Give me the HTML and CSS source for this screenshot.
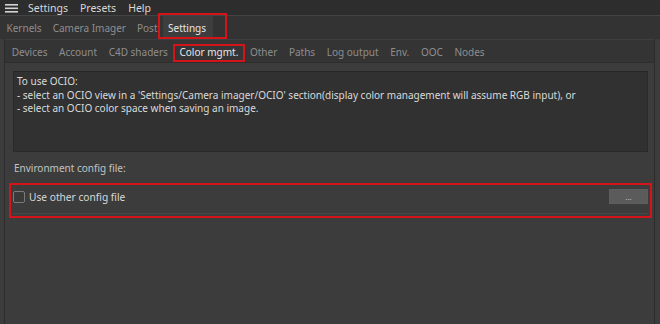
FILE: index.html
```html
<!DOCTYPE html>
<html>
<head>
    <title>Color management settings</title>
    <link rel="stylesheet" href="styles.css">
</head>
<body>
    <div class="menubar">
        <svg class="burger" width="13" height="10" viewBox="0 0 13 10">
            <rect x="0" y="1" width="13" height="1.6" fill="#d4d4d4"/>
            <rect x="0" y="4.5" width="13" height="1.6" fill="#d4d4d4"/>
            <rect x="0" y="8" width="13" height="1.6" fill="#d4d4d4"/>
        </svg>
        <span class="menu-item">Settings</span>
        <span class="menu-item">Presets</span>
        <span class="menu-item">Help</span>
    </div>

    <div class="main-tabs">
        <span class="tab">Kernels</span>
        <span class="tab">Camera Imager</span>
        <span class="tab">Post</span>
        <span class="tab active marked">Settings</span>
    </div>

    <div class="panel">
        <div class="sub-tabs">
            <span class="tab">Devices</span>
            <span class="tab">Account</span>
            <span class="tab">C4D shaders</span>
            <span class="tab active marked">Color mgmt.</span>
            <span class="tab">Other</span>
            <span class="tab">Paths</span>
            <span class="tab">Log output</span>
            <span class="tab">Env.</span>
            <span class="tab">OOC</span>
            <span class="tab">Nodes</span>
        </div>

        <div class="content">
            <div class="info">
                <p>To use OCIO:</p>
                <p>- select an OCIO view in a 'Settings/Camera imager/OCIO' section(display color management will assume RGB input), or</p>
                <p>- select an OCIO color space when saving an image.</p>
            </div>

            <div class="label">Environment config file:</div>

            <div class="config-box">
                <div class="config-row">
                    <label class="check">
                        <span class="box"></span>
                        Use other config file
                    </label>
                    <button class="browse">...</button>
                </div>
            </div>
        </div>
    </div>
</body>
</html>
```

FILE: styles.css
```css
body {
    margin: 0;
    padding: 0;
    width: 660px;
    height: 324px;
    overflow: hidden;
    background-color: #3c3c3c;
    font-family: "Noto Sans", "Open Sans", sans-serif;
    font-size: 10px;
    color: #d6d6d6;
}

.menubar {
    height: 15px;
    display: flex;
    align-items: center;
    background-color: #2d2d2d;
    border-bottom: 1px solid #444444;
    padding-left: 5px;
}

.burger {
    margin-right: 10px;
}

.menu-item {
    margin-right: 12px;
    color: #d8d8d8;
    font-size: 10.5px;
}

.main-tabs {
    height: 23px;
    display: flex;
    align-items: stretch;
    background-color: #333333;
    padding-left: 1px;
}

.tab {
    position: relative;
    display: flex;
    align-items: center;
    padding: 0 5.5px;
    color: #8e8e8e;
}

.main-tabs .tab.active {
    background-color: #3e3e3e;
    color: #e6e6e6;
    padding: 0 7px 0 5px;
}

.marked::after {
    content: "";
    position: absolute;
    border: 2px solid #d3151b;
    pointer-events: none;
}

.main-tabs .marked::after {
    left: -5px;
    right: -14px;
    top: -3px;
    bottom: 0;
}

.panel {
    margin-left: 4px;
    margin-right: 5px;
    height: 285px;
    border-left: 1px solid #2c2c2c;
    border-right: 1px solid #2c2c2c;
}

.sub-tabs {
    height: 22px;
    display: flex;
    align-items: stretch;
    background-color: #343434;
    border-top: 1px solid #3f3f3f;
    border-bottom: 1px solid #2e2e2e;
    padding-left: 1px;
}

.sub-tabs .tab {
    padding: 2px 5.8px 0;
}

.sub-tabs .tab.active {
    color: #e8e8e8;
    background-color: #353535;
}

.sub-tabs .marked::after {
    left: -1px;
    right: -1px;
    top: 4px;
    bottom: 0;
}

.content {
    padding: 8px 6px 0 8px;
}

.info {
    height: 74px;
    background-color: #313131;
    border: 1px solid #2a2a2a;
    border-top-color: #262626;
    padding: 3px 3px 2px;
    color: #dadada;
}

.info p {
    margin: 0;
    line-height: 13.5px;
}

.label {
    margin-top: 9px;
    margin-left: 1px;
    color: #c2c2c2;
    line-height: 14px;
}

.config-box {
    margin-top: 8px;
    margin-left: -4px;
    margin-right: -4px;
    border: 2px solid #d3151b;
    padding: 2px 1px 2px 2px;
}

.config-row {
    height: 26px;
    display: flex;
    align-items: flex-start;
    justify-content: space-between;
    border-bottom: 1px solid #474747;
}

.check {
    display: flex;
    align-items: center;
    margin-top: 3px;
    color: #d8d8d8;
    font-size: 10.2px;
}

.box {
    width: 10px;
    height: 10px;
    border: 1px solid #7a7a7a;
    border-radius: 2px;
    margin-right: 4px;
    background-color: #3a3a3a;
}

.browse {
    width: 39px;
    height: 15px;
    margin-top: 2px;
    margin-right: 1px;
    border: 1px solid #5e5e5e;
    background-color: #5b5b5b;
    color: #c8c8c8;
    font-family: "Noto Sans", sans-serif;
    font-size: 8px;
    padding: 0;
    line-height: 10px;
}
```
